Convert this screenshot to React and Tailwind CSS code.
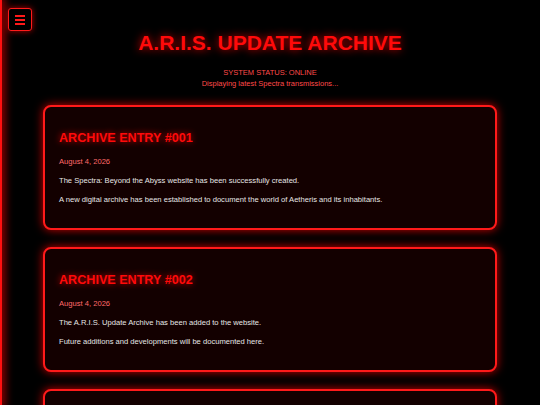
import React from 'react';

const entries = [
  {
    id: '001',
    date: 'August 4, 2026',
    lines: [
      'The Spectra: Beyond the Abyss website has been successfully created.',
      'A new digital archive has been established to document the world of Aetheris and its inhabitants.',
    ],
  },
  {
    id: '002',
    date: 'August 4, 2026',
    lines: [
      'The A.R.I.S. Update Archive has been added to the website.',
      'Future additions and developments will be documented here.',
    ],
  },
  {
    id: '003',
    date: 'August 4, 2026',
    lines: ['More entries are on the way.'],
  },
];

const EntryCard = ({ entry }) => (
  <div className="rounded-[8px] border-2 border-[#ff1a1a] bg-[#130000] px-[14px] pt-[24px] pb-[24px] shadow-[0_0_10px_rgba(255,0,0,0.8)]">
    <h2 className="text-[12.6px] font-bold leading-[15px] text-[#ff0a0a] [text-shadow:0_0_6px_rgba(255,0,0,0.8)]">
      ARCHIVE ENTRY #{entry.id}
    </h2>
    <p className="mt-[11px] text-[7.6px] leading-[9px] text-[#ff6a6a]">{entry.date}</p>
    <div className="mt-[10px] flex flex-col gap-[10px]">
      {entry.lines.map((line, i) => (
        <p key={i} className="text-[7.6px] leading-[9px] text-[#e6e6e6]">{line}</p>
      ))}
    </div>
  </div>
);

export default function App() {
  return (
    <div className="relative min-h-screen bg-black font-['Liberation_Sans',Arial,sans-serif]">
      {/* collapsed sidebar edge */}
      <div className="fixed left-[-1px] top-0 h-screen w-[3px] bg-[#ff1010] shadow-[0_0_8px_3px_rgba(255,0,0,0.6)]" />

      <button className="absolute left-[8px] top-[8px] flex h-[23px] w-[24px] flex-col items-center justify-center gap-[2px] rounded-[3px] border border-[#ff1a1a] bg-black shadow-[0_0_6px_rgba(255,0,0,0.7)]">
        <span className="h-[2px] w-[10px] bg-[#ff1a1a]" />
        <span className="h-[2px] w-[10px] bg-[#ff1a1a]" />
        <span className="h-[2px] w-[10px] bg-[#ff1a1a]" />
      </button>

      <header className="pt-[31px] text-center">
        <h1 className="text-[21px] font-bold leading-[24px] text-[#ff0a0a] [text-shadow:0_0_8px_rgba(255,0,0,0.9)]">
          A.R.I.S. UPDATE ARCHIVE
        </h1>
        <p className="mt-[12px] text-[7.5px] leading-[11px] text-[#ff4a4a]">SYSTEM STATUS: ONLINE</p>
        <p className="text-[7.5px] leading-[11px] text-[#ff4a4a]">Displaying latest Spectra transmissions...</p>
      </header>

      <main className="mx-[43px] mt-[16px] flex flex-col gap-[17px] pb-8">
        {entries.map((e) => (
          <EntryCard key={e.id} entry={e} />
        ))}
      </main>
    </div>
  );
}
